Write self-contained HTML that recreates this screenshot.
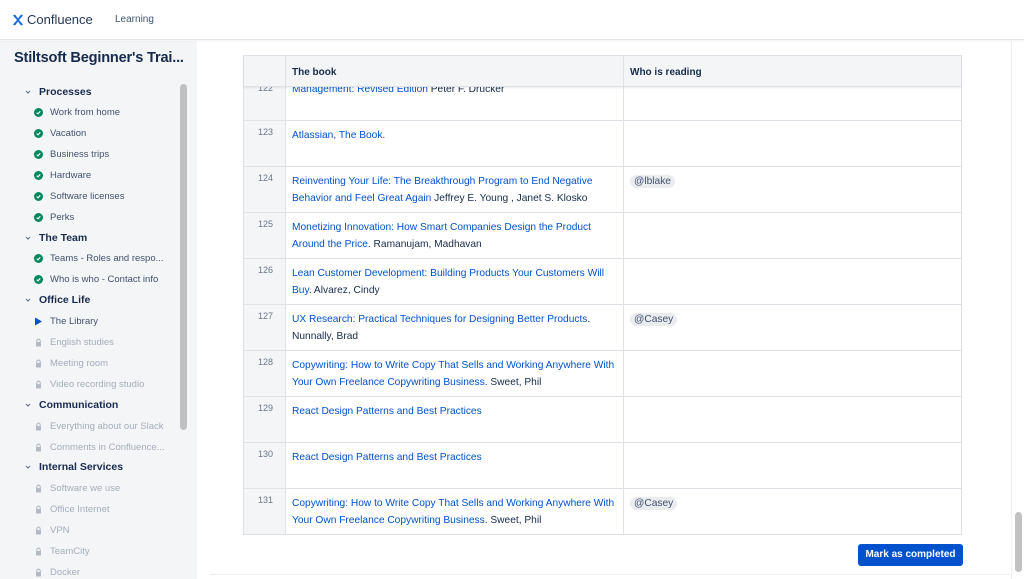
<!DOCTYPE html>
<html><head><meta charset="utf-8"><style>
*{box-sizing:border-box;margin:0;padding:0}
body{width:1024px;height:579px;overflow:hidden;font-family:"Liberation Sans",Arial,sans-serif;background:#fff;position:relative;color:#172b4d}
.hdr{position:absolute;left:0;top:0;width:1024px;height:40px;background:#fff;border-bottom:1px solid #e4e6ea;box-shadow:0 1px 2px rgba(0,0,0,.06);z-index:5}
.logo{position:absolute;left:12px;top:12px;font-size:13px;color:#253858}
.logo svg{vertical-align:-2px;margin-right:3px}
.learn{position:absolute;left:115px;top:14px;font-size:10px;color:#42526e}
.side{position:absolute;left:0;top:41px;width:197px;height:538px;background:#f4f5f7}
.title{position:absolute;left:14px;top:50px;font-size:14.6px;font-weight:bold;color:#172b4d;white-space:nowrap;letter-spacing:-0.2px}
.sb{position:absolute;left:180px;top:84px;width:7px;height:346px;background:#c1c1c1;border-radius:4px}
.it{position:absolute;white-space:nowrap;font-size:9.5px;color:#42526e}
.sec{left:39px;font-size:10.5px;font-weight:bold;color:#172b4d}
.chev{position:absolute;left:25px;width:6px;height:6px}
.ch{left:50px}
.ic{position:absolute;left:34px;width:9px;height:9px}
.lk{color:#a5adba}
.tbl{position:absolute;left:243px;top:55px;width:719px;height:480px;border:1px solid #dfe1e6;font-size:10.2px}
.row{position:absolute;left:0;width:717px;border-top:1px solid #dfe1e6}
.c{position:absolute;top:0;bottom:0;overflow:hidden}
.c1{left:0;width:42px;background:#f4f5f7;color:#6b778c;font-size:9px;padding:6px 0 0 14px;border-right:1px solid #dfe1e6}
.c2{left:42px;width:338px;padding:6px 6px 0;line-height:17px;border-right:1px solid #dfe1e6}
.c3{left:380px;width:337px;padding:6px 6px 0;line-height:17px}
.hd{background:#f4f5f7;font-weight:bold;font-size:10px}
.hd .c{padding-top:8px}
a{color:#0052cc;text-decoration:none}
.m{background:#ebecf0;border-radius:8px;padding:1px 4px;color:#42526e}
.btn{position:absolute;left:858px;top:544px;width:105px;height:22px;background:#0052cc;color:#fff;font-size:10px;font-weight:bold;border-radius:3px;text-align:center;line-height:22px}
.vs{position:absolute;left:1015px;top:512px;width:7px;height:60px;background:#c1c1c1;border-radius:4px}
.vl{position:absolute;left:1011px;top:41px;width:1px;height:538px;background:#eee}
.bl{position:absolute;left:210px;top:574px;width:800px;height:1px;background:#eee}
</style></head><body>
<div class="hdr"><div class="logo"><svg width="12" height="12" viewBox="0 0 12 12"><path d="M1 1.5L5 6L1 10.5L3 11.5L6 7.5L9 11.5L11 10.5L7 6L11 1.5L9 0.5L6 4.5L3 0.5Z" fill="#1868db"/></svg>Confluence</div><div class="learn">Learning</div></div>
<div class="side"></div>
<div class="title">Stiltsoft Beginner's Trai...</div>
<div class="sb"></div>
<svg width="0" height="0" style="position:absolute"><defs><symbol id="cv" viewBox="0 0 6 6"><path d="M1 2L3 4L5 2" stroke="#6b778c" stroke-width="1.2" fill="none"/></symbol><symbol id="lock" viewBox="0 0 9 9"><path d="M2.8 4V2.8A1.7 1.7 0 0 1 6.2 2.8V4" stroke="#b3bac5" stroke-width="1.1" fill="none"/><rect x="2" y="4" width="5" height="4.5" rx=".6" fill="#b3bac5"/></symbol><symbol id="chk" viewBox="0 0 9 9"><circle cx="4.5" cy="4.5" r="4.5" fill="#00875a"/><path d="M2.7 4.6L4 5.8L6.3 3.3" stroke="#fff" stroke-width="1.1" fill="none"/></symbol></defs></svg>
<svg class="chev" style="top:89px"><use href="#cv"/></svg><div class="it sec" style="top:86px">Processes</div>
<svg class="ic" style="top:108px"><use href="#chk"/></svg><div class="it ch" style="top:107px">Work from home</div>
<svg class="ic" style="top:129px"><use href="#chk"/></svg><div class="it ch" style="top:128px">Vacation</div>
<svg class="ic" style="top:150px"><use href="#chk"/></svg><div class="it ch" style="top:149px">Business trips</div>
<svg class="ic" style="top:171px"><use href="#chk"/></svg><div class="it ch" style="top:170px">Hardware</div>
<svg class="ic" style="top:192px"><use href="#chk"/></svg><div class="it ch" style="top:191px">Software licenses</div>
<svg class="ic" style="top:213px"><use href="#chk"/></svg><div class="it ch" style="top:212px">Perks</div>
<svg class="chev" style="top:235px"><use href="#cv"/></svg><div class="it sec" style="top:232px">The Team</div>
<svg class="ic" style="top:254px"><use href="#chk"/></svg><div class="it ch" style="top:253px">Teams - Roles and respo...</div>
<svg class="ic" style="top:275px"><use href="#chk"/></svg><div class="it ch" style="top:274px">Who is who - Contact info</div>
<svg class="chev" style="top:297px"><use href="#cv"/></svg><div class="it sec" style="top:294px">Office Life</div>
<svg class="ic" style="top:317px" viewBox="0 0 9 9"><path d="M1 0.5L8 4.5L1 8.5Z" fill="#0052cc"/></svg><div class="it ch" style="top:316px">The Library</div>
<svg class="ic" style="top:338px"><use href="#lock"/></svg><div class="it ch lk" style="top:337px">English studies</div>
<svg class="ic" style="top:359px"><use href="#lock"/></svg><div class="it ch lk" style="top:358px">Meeting room</div>
<svg class="ic" style="top:380px"><use href="#lock"/></svg><div class="it ch lk" style="top:379px">Video recording studio</div>
<svg class="chev" style="top:402px"><use href="#cv"/></svg><div class="it sec" style="top:399px">Communication</div>
<svg class="ic" style="top:422px"><use href="#lock"/></svg><div class="it ch lk" style="top:421px">Everything about our Slack</div>
<svg class="ic" style="top:443px"><use href="#lock"/></svg><div class="it ch lk" style="top:442px">Comments in Confluence...</div>
<svg class="chev" style="top:464px"><use href="#cv"/></svg><div class="it sec" style="top:461px">Internal Services</div>
<svg class="ic" style="top:484px"><use href="#lock"/></svg><div class="it ch lk" style="top:483px">Software we use</div>
<svg class="ic" style="top:505px"><use href="#lock"/></svg><div class="it ch lk" style="top:504px">Office Internet</div>
<svg class="ic" style="top:526px"><use href="#lock"/></svg><div class="it ch lk" style="top:525px">VPN</div>
<svg class="ic" style="top:547px"><use href="#lock"/></svg><div class="it ch lk" style="top:546px">TeamCity</div>
<svg class="ic" style="top:568px"><use href="#lock"/></svg><div class="it ch lk" style="top:567px">Docker</div>
<div class="vl"></div>
<div class="tbl">
<div class="row" style="top:30px;height:35px"><div class="c c1" style="padding-top:0;margin-top:-4px">122</div><div class="c c2" style="padding-top:0;top:-6px"><a>Management: Revised Edition</a> Peter F. Drucker</div><div class="c c3"></div></div>
<div class="row" style="top:64px;height:46px"><div class="c c1">123</div><div class="c c2"><a>Atlassian, The Book.</a></div><div class="c c3"></div></div>
<div class="row" style="top:110px;height:46px"><div class="c c1">124</div><div class="c c2"><a>Reinventing Your Life: The Breakthrough Program to End Negative Behavior and Feel Great Again</a> Jeffrey E. Young , Janet S. Klosko</div><div class="c c3"><span class="m">@lblake</span></div></div>
<div class="row" style="top:156px;height:46px"><div class="c c1">125</div><div class="c c2"><a>Monetizing Innovation: How Smart Companies Design the Product Around the Price</a>. Ramanujam, Madhavan</div><div class="c c3"></div></div>
<div class="row" style="top:202px;height:46px"><div class="c c1">126</div><div class="c c2"><a>Lean Customer Development: Building Products Your Customers Will Buy</a>. Alvarez, Cindy</div><div class="c c3"></div></div>
<div class="row" style="top:248px;height:46px"><div class="c c1">127</div><div class="c c2"><a>UX Research: Practical Techniques for Designing Better Products</a>. Nunnally, Brad</div><div class="c c3"><span class="m">@Casey</span></div></div>
<div class="row" style="top:294px;height:46px"><div class="c c1">128</div><div class="c c2"><a>Copywriting: How to Write Copy That Sells and Working Anywhere With Your Own Freelance Copywriting Business</a>. Sweet, Phil</div><div class="c c3"></div></div>
<div class="row" style="top:340px;height:46px"><div class="c c1">129</div><div class="c c2"><a>React Design Patterns and Best Practices</a></div><div class="c c3"></div></div>
<div class="row" style="top:386px;height:46px"><div class="c c1">130</div><div class="c c2"><a>React Design Patterns and Best Practices</a></div><div class="c c3"></div></div>
<div class="row" style="top:432px;height:46px"><div class="c c1">131</div><div class="c c2"><a>Copywriting: How to Write Copy That Sells and Working Anywhere With Your Own Freelance Copywriting Business</a>. Sweet, Phil</div><div class="c c3"><span class="m">@Casey</span></div></div>
<div class="row hd" style="top:0;height:31px;border-top:0;border-bottom:1px solid #dfe1e6;box-shadow:0 1px 2px rgba(0,0,0,.08)"><div class="c c1"></div><div class="c c2">The book</div><div class="c c3">Who is reading</div></div>
</div>
<div class="btn">Mark as completed</div>
<div class="bl"></div>
<div class="vs"></div>
</body></html>
